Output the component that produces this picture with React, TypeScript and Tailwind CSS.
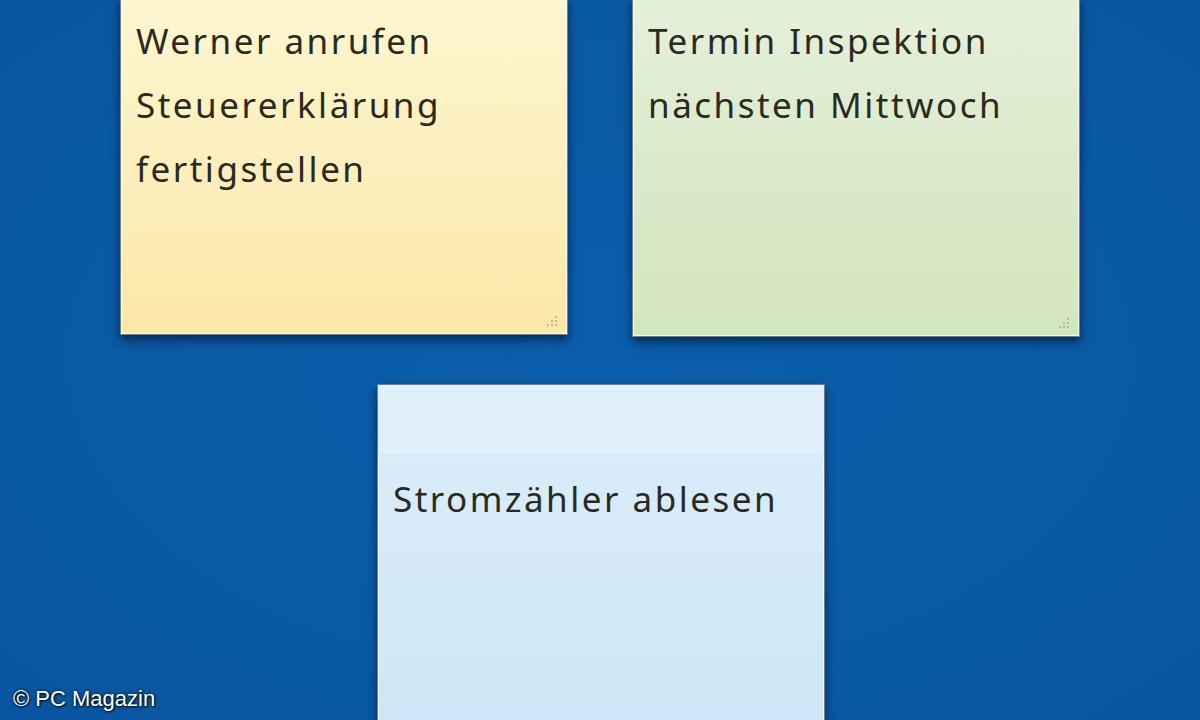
import React from "react";

function Grip() {
  return (
    <svg width="14" height="14" viewBox="0 0 14 14" className="absolute bottom-[6px] right-[8px]">
      {[
        [11, 3],
        [11, 7],
        [7, 7],
        [11, 11],
        [7, 11],
        [3, 11],
      ].map(([x, y], i) => (
        <rect key={i} x={x - 1} y={y - 1} width="2" height="2" fill="#a8a48a" opacity="0.7" />
      ))}
    </svg>
  );
}

function Note({
  lines,
  bg,
  className,
  header,
}: {
  lines: string[];
  bg: string;
  className: string;
  header?: boolean;
}) {
  return (
    <div
      className={`relative w-[448px] shrink-0 border border-[#6f7e8c] shadow-[0_5px_9px_rgba(0,20,50,0.65),inset_0_0_0_1px_rgba(255,255,255,0.75)] ${bg} ${className}`}
    >
      {header && <div className="h-[70px] bg-[#e0f0fa] border-b border-[#d3e8f6]" />}
      <div
        className={`pl-[15px] ${header ? "pt-[12px]" : "pt-[10px]"} text-[35px] leading-[64px] text-[#2a2a20] tracking-[2.5px]`}
        style={{ fontFamily: '"Noto Sans", "DejaVu Sans", sans-serif' }}
      >
        {lines.map((l, i) => (
          <div key={i} className="whitespace-nowrap">
            {l}
          </div>
        ))}
      </div>
      {!header && <Grip />}
    </div>
  );
}

export default function App() {
  return (
    <div className="relative w-[1200px] h-[720px] overflow-hidden bg-[radial-gradient(ellipse_at_center,#0b5dab_0%,#0a5aa4_60%,#0954a0_100%)]">
      <div className="flex gap-[64px] pl-[120px] -mt-[2px]">
        <Note
          lines={["Werner anrufen", "Steuererklärung", "fertigstellen"]}
          bg="bg-[linear-gradient(180deg,#fdf6cf_0%,#fcefbd_50%,#fbe8a7_100%)]"
          className="h-[337px]"
        />
        <Note
          lines={["Termin Inspektion", "nächsten Mittwoch"]}
          bg="bg-[linear-gradient(180deg,#e5f0d9_0%,#dbeacb_50%,#d2e6bc_100%)]"
          className="h-[339px]"
        />
      </div>
      <div className="flex pl-[377px] mt-[47px]">
        <Note
          lines={["Stromzähler ablesen"]}
          bg="bg-[linear-gradient(180deg,#dbedf9_0%,#d4e9f7_60%,#cde5f5_100%)]"
          className="h-[360px]"
          header
        />
      </div>
      <div
        className="absolute left-[13px] bottom-[8px] text-[22px] leading-[26px] text-white [text-shadow:0_0_3px_rgba(0,0,0,0.9),1px_1px_2px_rgba(0,0,0,0.8)]"
        style={{ fontFamily: '"Liberation Sans", Arial, sans-serif' }}
      >
        © PC Magazin
      </div>
    </div>
  );
}
